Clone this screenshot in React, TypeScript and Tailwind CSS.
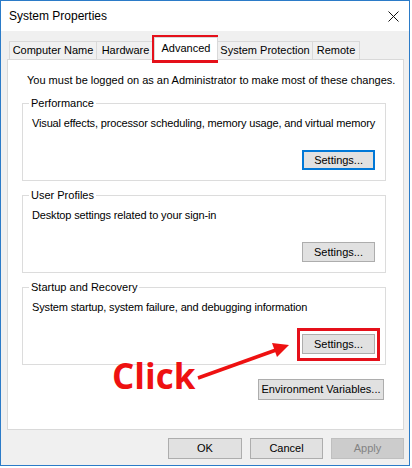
import React from 'react';

const font = "font-['Liberation_Sans',Arial,sans-serif]";

const Button = ({ label, className = '' }: { label: string; className?: string }) => (
  <div
    className={`h-[20px] flex items-center justify-center bg-[#e1e1e1] border border-[#adadad] text-[11px] text-black ${className}`}
  >
    {label}
  </div>
);

const Group = ({
  title,
  desc,
  focused,
  className = '',
}: {
  title: string;
  desc: string;
  focused?: boolean;
  className?: string;
}) => (
  <fieldset className={`ml-[14px] w-[364px] border border-[#dcdcdc] pl-[6px] pr-[10px] pb-[10px] ${className}`}>
    <legend className="px-[2px] text-[11px] leading-[15px] text-black">{title}</legend>
    <div className="mt-[5px] pl-[3px] text-[11px] leading-[15px] text-black whitespace-nowrap tracking-[-0.15px]">
      {desc}
    </div>
    <div className="mt-[19px] flex justify-end">
      {focused ? (
        <div className="w-[73px] h-[20px] flex items-center justify-center bg-[#e1e1e1] border-2 border-[#0078d7] text-[11px] text-black">
          Settings...
        </div>
      ) : (
        <Button label="Settings..." className="w-[73px]" />
      )}
    </div>
  </fieldset>
);

const tabs = [
  { label: 'Computer Name', w: 'w-[88px]' },
  { label: 'Hardware', w: 'w-[59px]' },
  { label: 'Advanced', w: 'w-[64px]', active: true },
  { label: 'System Protection', w: 'w-[96px]' },
  { label: 'Remote', w: 'w-[48px]' },
];

export default function App() {
  return (
    <div className={`relative w-[412px] h-[468px] bg-white ${font}`}>
      <div className="w-[410px] h-[466px] border border-[#2b7bc8] bg-[#f0f0f0] flex flex-col">
        {/* title bar */}
        <div className="h-[30px] bg-white flex items-center justify-between pl-[8px] pr-[10px]">
          <span className="text-[12px] text-black">System Properties</span>
          <svg width="11" height="11" viewBox="0 0 11 11">
            <path d="M0.5 0.5 L10.5 10.5 M10.5 0.5 L0.5 10.5" stroke="#111" strokeWidth="1" />
          </svg>
        </div>

        <div className="pl-[6px] pt-[6px] flex flex-col">
          {/* tabs */}
          <div className="ml-[2px] h-[22px] flex items-end">
            {tabs.map((t) =>
              t.active ? (
                <div
                  key={t.label}
                  className={`${t.w} relative z-10 self-start -ml-px h-[23px] bg-white border border-b-0 border-[#d9d9d9] flex items-center justify-center text-[11px] text-black pb-[2px]`}
                >
                  {t.label}
                </div>
              ) : (
                <div
                  key={t.label}
                  className={`${t.w} -ml-px first:ml-0 h-[18px] bg-[#f0f0f0] border border-b-0 border-[#d9d9d9] flex items-center justify-center text-[11px] text-black`}
                >
                  {t.label}
                </div>
              )
            )}
          </div>

          {/* panel */}
          <div className="w-[397px] h-[371px] bg-white border border-[#d9d9d9] flex flex-col">
            <div className="pt-[13px] pl-[19px] text-[11px] leading-[15px] text-black whitespace-nowrap">
              You must be logged on as an Administrator to make most of these changes.
            </div>
            <Group
              className="mt-[8px]"
              title="Performance"
              desc="Visual effects, processor scheduling, memory usage, and virtual memory"
              focused
            />
            <Group className="mt-[7px]" title="User Profiles" desc="Desktop settings related to your sign-in" />
            <Group
              className="mt-[7px]"
              title="Startup and Recovery"
              desc="System startup, system failure, and debugging information"
            />
            <div className="mt-[14px] mr-[19px] flex justify-end">
              <Button label="Environment Variables..." className="w-[126px] h-[21px]" />
            </div>
          </div>

          {/* dialog buttons */}
          <div className="mt-[8px] pr-[5px] flex justify-end gap-[8px]">
            <Button label="OK" className="w-[74px] h-[21px]" />
            <Button label="Cancel" className="w-[73px] h-[21px]" />
            <div className="w-[73px] h-[21px] flex items-center justify-center bg-[#cccccc] border border-[#bfbfbf] text-[11px] text-[#838383]">
              Apply
            </div>
          </div>
        </div>
      </div>

      {/* annotations */}
      <div className="absolute left-[152px] top-[35px] w-[66px] h-[28px] border-[3px] border-[#e5101a]" />
      <div className="absolute left-[297px] top-[328px] w-[83px] h-[33px] border-[3px] border-[#e5101a]" />
      <span className="absolute left-[112px] top-[353px] text-[35px] leading-[45px] font-bold text-[#ee1111] font-['Open_Sans',sans-serif]">
        Click
      </span>
      <svg className="absolute left-0 top-0 pointer-events-none" width="412" height="468">
        <line x1="198" y1="378" x2="276" y2="350" stroke="#ee1111" strokeWidth="3.5" />
        <polygon points="289,345 272,343 277,357" fill="#ee1111" />
      </svg>
    </div>
  );
}
